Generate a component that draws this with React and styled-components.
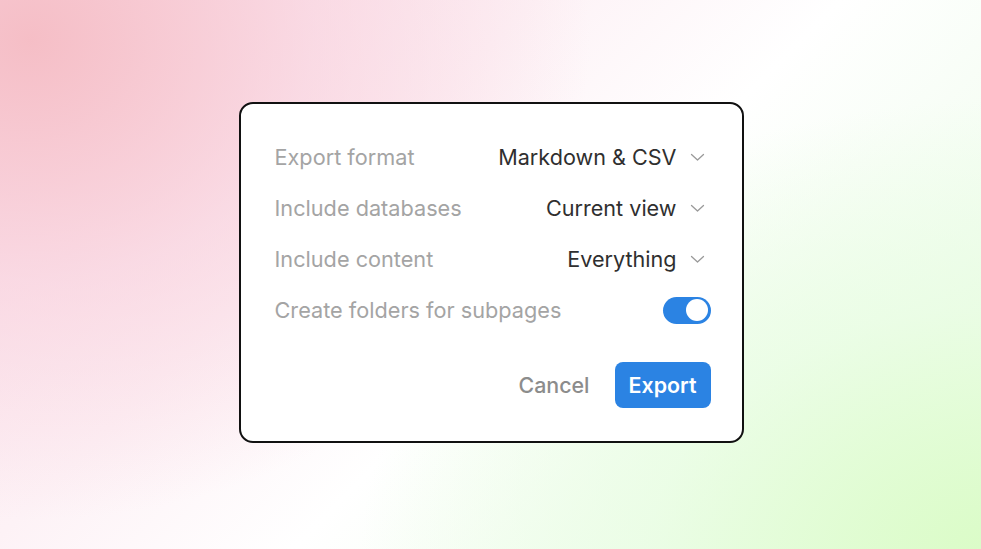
import React, { useState } from "react";
import styled, { createGlobalStyle } from "styled-components";

const GlobalStyle = createGlobalStyle`
  html, body {
    margin: 0;
    padding: 0;
  }
  body {
    font-family: Inter, "Noto Sans", sans-serif;
  }
`;

const Page = styled.div`
  width: 981px;
  height: 549px;
  display: flex;
  align-items: center;
  justify-content: center;
  overflow: hidden;
  background:
    radial-gradient(ellipse 560px 480px at 30px 40px, rgba(245, 188, 196, 0.95), rgba(248, 205, 218, 0.6) 50%, rgba(255, 255, 255, 0) 100%),
    radial-gradient(ellipse 640px 460px at 1000px 560px, rgba(218, 252, 198, 1), rgba(232, 253, 226, 0.75) 55%, rgba(255, 255, 255, 0) 100%),
    linear-gradient(135deg, #fbe3ec 0%, #fdf2f6 35%, #ffffff 55%, #f2fdf0 80%, #e6fcdc 100%);
`;

const Card = styled.div`
  box-sizing: border-box;
  width: 505px;
  height: 341px;
  margin: -4px 0 0 1px;
  padding: 38px 31px 33px 34px;
  background: #ffffff;
  border: 2px solid #111111;
  border-radius: 14px;
  display: flex;
  flex-direction: column;
`;

const Rows = styled.div`
  display: flex;
  flex-direction: column;
  gap: 21px;
`;

const Row = styled.div`
  height: 30px;
  display: flex;
  align-items: center;
  justify-content: space-between;
`;

const Label = styled.span`
  font-size: 21.7px;
  color: #a4a4a4;
`;

const Select = styled.button`
  display: flex;
  align-items: center;
  gap: 13px;
  padding: 0 6px 0 0;
  border: 0;
  background: none;
  font-family: inherit;
  font-size: 21.6px;
  color: #2f2f2f;
  cursor: pointer;
`;

const Chevron = () => (
  <svg width="15" height="9" viewBox="0 0 15 9" fill="none">
    <path d="M1.5 1.5 L7.5 7 L13.5 1.5" stroke="#9a9a9a" strokeWidth="1.3" strokeLinecap="round" strokeLinejoin="round" />
  </svg>
);

const Toggle = styled.button`
  position: relative;
  width: 48px;
  height: 27px;
  padding: 0;
  border: 0;
  border-radius: 14px;
  background: ${(p) => (p.$on ? "#2b83e3" : "#d6d6d6")};
  cursor: pointer;

  &::after {
    content: "";
    position: absolute;
    top: 2.5px;
    left: ${(p) => (p.$on ? "23px" : "3px")};
    width: 22px;
    height: 22px;
    border-radius: 50%;
    background: #ffffff;
  }
`;

const Footer = styled.div`
  margin-top: auto;
  display: flex;
  justify-content: flex-end;
  align-items: center;
  gap: 25px;
`;

const CancelButton = styled.button`
  border: 0;
  background: none;
  padding: 0;
  font-family: inherit;
  font-size: 21.4px;
  font-weight: 500;
  color: #8c8c8c;
  cursor: pointer;
`;

const ExportButton = styled.button`
  width: 96px;
  height: 46px;
  border: 0;
  border-radius: 8px;
  background: #2b83e3;
  color: #ffffff;
  font-family: inherit;
  font-size: 21.4px;
  font-weight: 600;
  cursor: pointer;
`;

const options = [
  { label: "Export format", value: "Markdown & CSV" },
  { label: "Include databases", value: "Current view" },
  { label: "Include content", value: "Everything" },
];

const App = () => {
  const [folders, setFolders] = useState(true);

  return (
    <Page>
      <GlobalStyle />
      <Card>
        <Rows>
          {options.map((o) => (
            <Row key={o.label}>
              <Label>{o.label}</Label>
              <Select>
                {o.value}
                <Chevron />
              </Select>
            </Row>
          ))}
          <Row>
            <Label>Create folders for subpages</Label>
            <Toggle $on={folders} onClick={() => setFolders(!folders)} />
          </Row>
        </Rows>
        <Footer>
          <CancelButton>Cancel</CancelButton>
          <ExportButton>Export</ExportButton>
        </Footer>
      </Card>
    </Page>
  );
};

export default App;
